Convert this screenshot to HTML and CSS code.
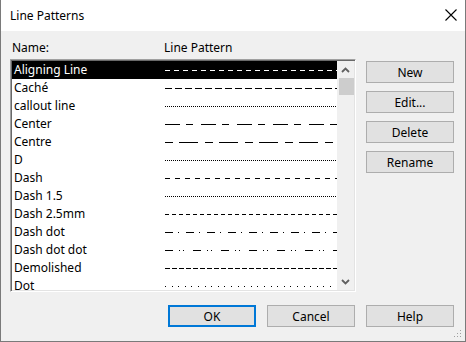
FILE: index.html
```html
<!DOCTYPE html>
<html lang="en">
<head>
    <meta charset="UTF-8">
    <title>Line Patterns</title>
    <link rel="stylesheet" href="styles.css">
</head>
<body>

    <div class="dialog">
        <div class="titlebar">
            <span class="title">Line Patterns</span>
            <svg class="close" width="12" height="12" viewBox="0 0 12 12">
                <path d="M0.5 0.5 L11.5 11.5 M11.5 0.5 L0.5 11.5" stroke="#000" stroke-width="1.1" fill="none"/>
            </svg>
        </div>

        <div class="content">
            <div class="headers">
                <span class="col-name">Name:</span>
                <span class="col-pattern">Line Pattern</span>
            </div>

            <div class="main">
                <div class="listbox">
                    <div class="rows">
                        <div class="row selected">
                            <span class="name">Aligning Line</span>
                            <svg class="pattern" width="172" height="18"><line x1="0" y1="9.5" x2="172" y2="9.5" stroke-dasharray="5 4"/></svg>
                        </div>
                        <div class="row">
                            <span class="name">Caché</span>
                            <svg class="pattern" width="172" height="18"><line x1="0" y1="9.5" x2="172" y2="9.5" stroke-dasharray="7 3"/></svg>
                        </div>
                        <div class="row">
                            <span class="name">callout line</span>
                            <svg class="pattern" width="172" height="18"><line x1="0" y1="9.5" x2="172" y2="9.5" stroke-dasharray="1 1"/></svg>
                        </div>
                        <div class="row">
                            <span class="name">Center</span>
                            <svg class="pattern" width="172" height="18"><line x1="0" y1="9.5" x2="172" y2="9.5" stroke-dasharray="15 6 7 8"/></svg>
                        </div>
                        <div class="row">
                            <span class="name">Centre</span>
                            <svg class="pattern" width="172" height="18"><line x1="0" y1="9.5" x2="172" y2="9.5" stroke-dasharray="8 6 19 7"/></svg>
                        </div>
                        <div class="row">
                            <span class="name">D</span>
                            <svg class="pattern" width="172" height="18"><line x1="0" y1="9.5" x2="172" y2="9.5" stroke-dasharray="1 1"/></svg>
                        </div>
                        <div class="row">
                            <span class="name">Dash</span>
                            <svg class="pattern" width="172" height="18"><line x1="0" y1="9.5" x2="172" y2="9.5" stroke-dasharray="5 5"/></svg>
                        </div>
                        <div class="row">
                            <span class="name">Dash 1.5</span>
                            <svg class="pattern" width="172" height="18"><line x1="0" y1="9.5" x2="172" y2="9.5" stroke-dasharray="1 1"/></svg>
                        </div>
                        <div class="row">
                            <span class="name">Dash 2.5mm</span>
                            <svg class="pattern" width="172" height="18"><line x1="0" y1="9.5" x2="172" y2="9.5" stroke-dasharray="4 3"/></svg>
                        </div>
                        <div class="row">
                            <span class="name">Dash dot</span>
                            <svg class="pattern" width="172" height="18"><line x1="0" y1="9.5" x2="172" y2="9.5" stroke-dasharray="8 5 1 7"/></svg>
                        </div>
                        <div class="row">
                            <span class="name">Dash dot dot</span>
                            <svg class="pattern" width="172" height="18"><line x1="0" y1="9.5" x2="172" y2="9.5" stroke-dasharray="8 6 1 3 1 9"/></svg>
                        </div>
                        <div class="row">
                            <span class="name">Demolished</span>
                            <svg class="pattern" width="172" height="18"><line x1="0" y1="9.5" x2="172" y2="9.5" stroke-dasharray="5 2"/></svg>
                        </div>
                        <div class="row">
                            <span class="name">Dot</span>
                            <svg class="pattern" width="172" height="18"><line x1="0" y1="9.5" x2="172" y2="9.5" stroke-dasharray="1 5.6"/></svg>
                        </div>
                    </div>

                    <div class="scrollbar">
                        <div class="arrow">
                            <svg width="9" height="6" viewBox="0 0 9 6"><path d="M1 5 L4.5 1.5 L8 5" stroke="#606060" stroke-width="1.8" fill="none"/></svg>
                        </div>
                        <div class="thumb"></div>
                        <div class="track"></div>
                        <div class="arrow">
                            <svg width="9" height="6" viewBox="0 0 9 6"><path d="M1 1 L4.5 4.5 L8 1" stroke="#606060" stroke-width="1.8" fill="none"/></svg>
                        </div>
                    </div>
                </div>

                <div class="side-buttons">
                    <button class="btn">New</button>
                    <button class="btn">Edit...</button>
                    <button class="btn">Delete</button>
                    <button class="btn">Rename</button>
                </div>
            </div>

            <div class="footer">
                <button class="btn default">OK</button>
                <button class="btn">Cancel</button>
                <button class="btn">Help</button>
            </div>
        </div>

        <svg class="grip" width="8" height="8" viewBox="0 0 8 8">
            <rect x="6" y="0" width="1" height="1" fill="#a0a0a0"/>
            <rect x="3" y="3" width="1" height="1" fill="#a0a0a0"/>
            <rect x="6" y="3" width="1" height="1" fill="#a0a0a0"/>
            <rect x="0" y="6" width="1" height="1" fill="#a0a0a0"/>
            <rect x="3" y="6" width="1" height="1" fill="#a0a0a0"/>
            <rect x="6" y="6" width="1" height="1" fill="#a0a0a0"/>
        </svg>
    </div>

</body>
</html>
```

FILE: styles.css
```css
/* Page */
body {
    margin: 0;
    font-family: "Segoe UI", "Noto Sans", sans-serif;
    font-size: 12px;
    color: #000;
}

/* Dialog window */
.dialog {
    position: relative;
    width: 466px;
    height: 342px;
    box-sizing: border-box;
    background: #f0f0f0;
    border: 1px solid #7a7a7a;
    border-top: none;
}

/* Title bar */
.titlebar {
    display: flex;
    align-items: center;
    justify-content: space-between;
    height: 31px;
    background: #fff;
    padding: 0 8px 0 9px;
}

.title {
    line-height: 31px;
}

.close {
    margin-bottom: 2px;
}

/* Content */
.content {
    padding: 9px 11px 0 9px;
}

.headers {
    display: flex;
    height: 16px;
    line-height: 16px;
    margin-bottom: 3px;
}

.col-name {
    width: 152px;
    padding-left: 2px;
}

.main {
    display: flex;
    gap: 10px;
}

/* List box */
.listbox {
    display: flex;
    width: 346px;
    height: 233px;
    box-sizing: border-box;
    border: 1px solid;
    border-color: #a0a0a0 #fff #fff #a0a0a0;
    box-shadow: inset 1px 1px 0 #696969, inset -1px -1px 0 #e3e3e3;
    padding: 1px;
    background: #fff;
}

.rows {
    width: 325px;
    height: 229px;
    overflow: hidden;
}

.row {
    display: flex;
    align-items: center;
    height: 18px;
    line-height: 18px;
    color: #000;
}

.row .name {
    width: 151px;
    padding-left: 2px;
    white-space: nowrap;
}

.pattern {
    display: block;
    stroke: #000;
    stroke-width: 1;
    shape-rendering: crispEdges;
}

.row.selected {
    background: #000;
    color: #fff;
}

.row.selected .pattern {
    stroke: #fff;
}

/* Scrollbar */
.scrollbar {
    display: flex;
    flex-direction: column;
    width: 17px;
    height: 229px;
    background: #f0f0f0;
}

.arrow {
    display: flex;
    align-items: center;
    justify-content: center;
    height: 17px;
}

.thumb {
    height: 17px;
    margin: 0 0 0 2px;
    background: #cdcdcd;
}

.track {
    flex: 1;
}

/* Buttons */
.side-buttons {
    display: flex;
    flex-direction: column;
    gap: 8px;
    padding-top: 2px;
}

.btn {
    width: 88px;
    height: 22px;
    box-sizing: border-box;
    padding: 0;
    background: #e1e1e1;
    border: 1px solid #adadad;
    border-radius: 0;
    font-family: "Segoe UI", "Noto Sans", sans-serif;
    font-size: 12px;
    color: #000;
}

.btn.default {
    border: 2px solid #0078d7;
}

.footer {
    display: flex;
    justify-content: flex-end;
    gap: 11px;
    margin-top: 13px;
}

/* Resize grip */
.grip {
    position: absolute;
    right: 3px;
    bottom: 3px;
}
```
